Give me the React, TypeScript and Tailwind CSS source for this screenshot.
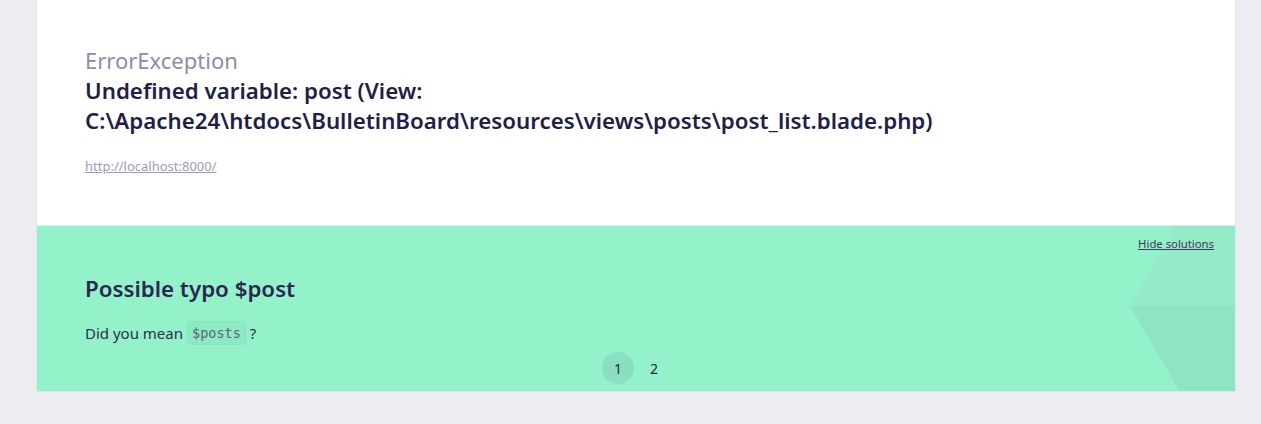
export default function App() {
  return (
    <div className="min-h-screen bg-[#ececf3] font-['Noto_Sans',sans-serif] text-[#252348]">
      <div className="ml-[36px] w-[1200px] border border-t-0 border-[#e4e4ec] bg-white">
        <section className="h-[225px] px-[48px] pt-[45px]">
          <p className="text-[22px] leading-[30px] font-normal text-[#8e8ca8]">ErrorException</p>
          <h1 className="mt-[1px] text-[22.3px] leading-[30px] font-semibold text-[#211f48]">
            Undefined variable: post (View: C:\Apache24\htdocs\BulletinBoard\resources\views\posts\post_list.blade.php)
          </h1>
          <a className="mt-[21px] block text-[13px] text-[#9d9bb5] underline">http://localhost:8000/</a>
        </section>
        <section className="relative h-[166px] overflow-hidden border-t border-[#d4f0e4] bg-[#94f2ca]">
          <svg className="absolute right-0 top-0" width="105" height="166" viewBox="0 0 105 166">
            <polygon points="45,0 105,0 105,80 0,80" fill="#95ebc8" />
            <polygon points="0,80 105,80 105,166 50,166" fill="#8fe4c2" />
          </svg>
          <div className="relative flex justify-end px-[21px] pt-[10px]">
            <a className="text-[11.3px] text-[#3e3c5e] underline">Hide solutions</a>
          </div>
          <div className="relative px-[48px] pt-[21px]">
            <h2 className="text-[22.3px] leading-[30px] font-semibold text-[#2a2850]">Possible typo $post</h2>
            <p className="mt-[17px] flex items-center text-[15px] text-[#2e2d50]">
              Did you mean
              <code className="mx-[4px] rounded-sm border border-[#88e6bf] bg-[#8deac3] px-[4px] py-[1px] font-['DejaVu_Sans_Mono',monospace] text-[13.5px] text-[#5b6478]">
                $posts
              </code>
              ?
            </p>
          </div>
          <div className="relative mt-[7px] flex justify-center gap-[4px] text-[14px] text-[#27264a]">
            <span className="flex h-8 w-8 items-center justify-center rounded-full bg-[#8bdfc1]">1</span>
            <span className="flex h-8 w-8 items-center justify-center rounded-full">2</span>
          </div>
        </section>
      </div>
    </div>
  );
}
